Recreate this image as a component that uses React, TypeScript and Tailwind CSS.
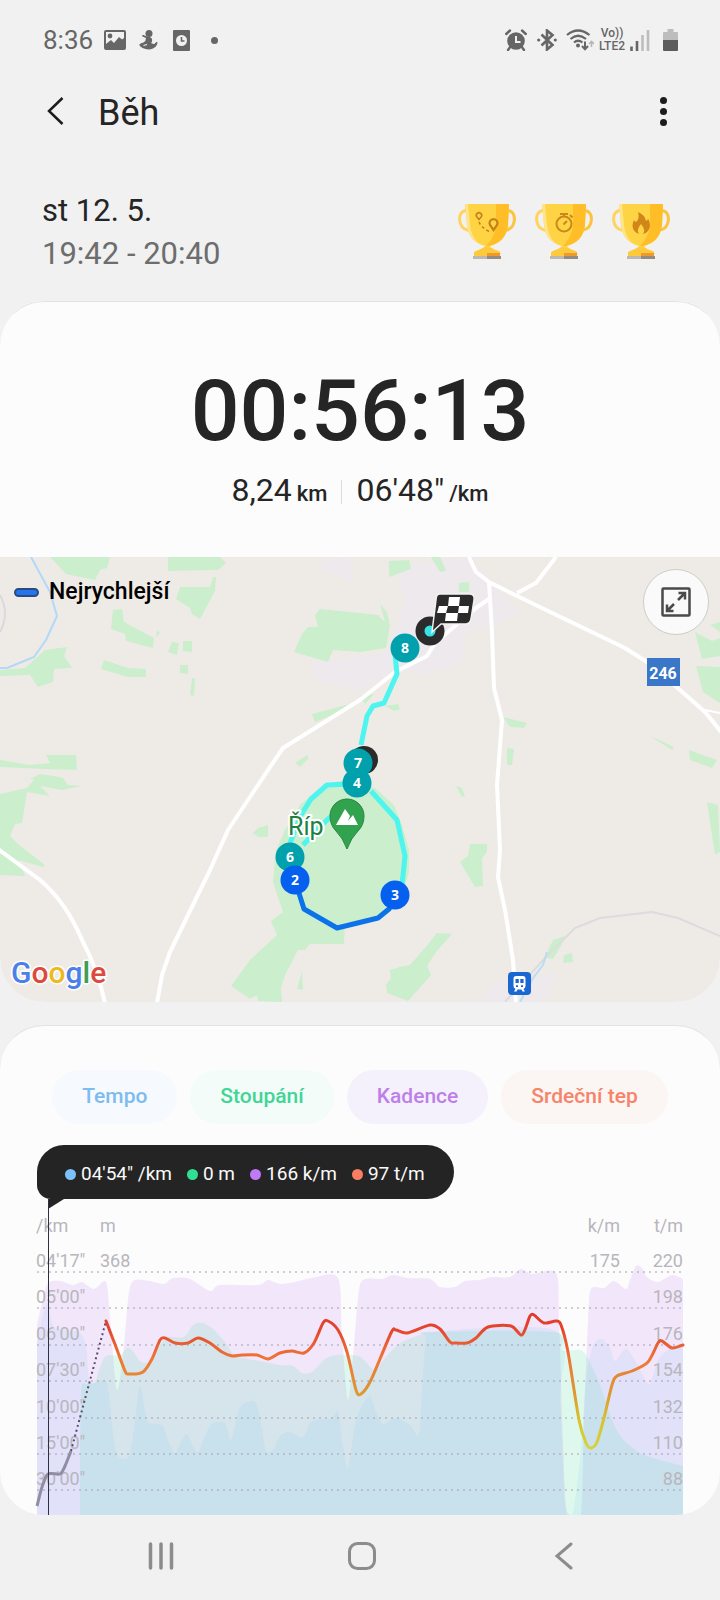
import type { ReactNode } from "react"

type Point = [number, number]

// Catmull-Rom spline through the points, as cubic beziers
function smooth(points: Point[]) {
  let d = `M${points[0][0]} ${points[0][1]}`
  for (let i = 0; i < points.length - 1; i++) {
    const p0 = points[i - 1] ?? points[i]
    const p1 = points[i]
    const p2 = points[i + 1]
    const p3 = points[i + 2] ?? p2
    d += ` C${p1[0] + (p2[0] - p0[0]) / 7} ${p1[1] + (p2[1] - p0[1]) / 7} ${p2[0] - (p3[0] - p1[0]) / 7} ${p2[1] - (p3[1] - p1[1]) / 7} ${p2[0]} ${p2[1]}`
  }
  return d
}

function area(points: Point[]) {
  return `${smooth(points)} V1515 H${points[0][0]} Z`
}

const cadence: Point[] = [
  [37, 1325], [42, 1303], [48, 1283], [60, 1281], [73, 1285], [82, 1282], [94, 1289], [106, 1282], [110, 1318], [117, 1390],
  [124, 1345], [129, 1292], [135, 1280], [150, 1281], [164, 1284], [173, 1278], [190, 1279], [210, 1291], [220, 1285], [258, 1285],
  [268, 1280], [280, 1284], [295, 1282], [312, 1278], [338, 1278], [342, 1335], [348, 1400], [354, 1345], [359, 1290], [365, 1279],
  [382, 1279], [393, 1275], [408, 1278], [430, 1279], [440, 1287], [455, 1287], [465, 1281], [480, 1280], [492, 1277], [510, 1277],
  [521, 1269], [532, 1274], [556, 1273], [559, 1320], [563, 1440], [566, 1505], [571, 1515], [581, 1514], [584, 1420], [588, 1320],
  [591, 1289], [604, 1288], [614, 1281], [626, 1289], [630, 1280], [636, 1266], [642, 1268], [647, 1277], [658, 1282], [672, 1275],
  [683, 1279],
]

const elevation: Point[] = [
  [80, 1515], [81, 1395], [86, 1384], [95, 1382], [100, 1367], [106, 1356], [120, 1355], [127, 1348], [133, 1351], [140, 1361],
  [150, 1362], [160, 1345], [168, 1337], [184, 1337], [193, 1325], [202, 1323], [212, 1328], [225, 1342], [236, 1356], [260, 1361],
  [280, 1365], [293, 1366], [302, 1373], [312, 1372], [325, 1359], [337, 1355], [358, 1356], [366, 1362], [375, 1370], [385, 1358],
  [400, 1343], [420, 1335], [432, 1332], [554, 1332], [562, 1350], [580, 1350], [588, 1358], [600, 1385], [612, 1420], [622, 1438],
  [640, 1453], [660, 1460], [683, 1466],
]

const pace: Point[] = [
  [37, 1345], [42, 1318], [48, 1303], [54, 1327], [78, 1332], [86, 1345], [90, 1382], [105, 1380], [109, 1395], [116, 1452],
  [129, 1456], [135, 1420], [140, 1386], [147, 1420], [155, 1424], [163, 1426], [168, 1440], [175, 1453], [181, 1442], [187, 1434],
  [193, 1446], [198, 1452], [205, 1436], [212, 1424], [225, 1423], [231, 1440], [239, 1410], [245, 1403], [256, 1403], [262, 1430],
  [266, 1451], [273, 1450], [280, 1436], [290, 1432], [303, 1437], [312, 1421], [330, 1419], [338, 1412], [342, 1440], [348, 1468],
  [355, 1425], [362, 1406], [370, 1396], [376, 1412], [383, 1424], [395, 1418], [410, 1425], [419, 1435], [422, 1390], [426, 1340],
  [432, 1332], [556, 1331], [560, 1400], [565, 1505], [570, 1515], [574, 1508], [581, 1450], [586, 1380], [593, 1346], [602, 1339],
  [610, 1348], [615, 1361], [626, 1349], [636, 1362], [649, 1384], [658, 1360], [668, 1350], [683, 1345],
]

const heartStart: Point[] = [[37, 1506], [42, 1487], [48, 1474], [60, 1474], [65, 1466], [71, 1451]]

const heartRate: Point[] = [
  [106, 1321], [116, 1347], [125, 1371], [129, 1374], [143, 1372], [152, 1359], [160, 1340], [165, 1338], [175, 1343], [188, 1343],
  [198, 1338], [210, 1343], [222, 1352], [232, 1356], [242, 1355], [257, 1355], [268, 1359], [280, 1353], [292, 1351], [304, 1353],
  [314, 1343], [323, 1323], [328, 1321], [338, 1330], [347, 1352], [356, 1390], [361, 1394], [371, 1380], [391, 1333], [396, 1330],
  [407, 1333], [430, 1325], [440, 1329], [450, 1342], [455, 1343], [467, 1343], [476, 1338], [488, 1327], [511, 1326], [522, 1335],
  [530, 1316], [534, 1315], [544, 1323], [556, 1321], [561, 1325], [568, 1352], [579, 1420], [586, 1443], [591, 1448], [597, 1442],
  [604, 1418], [612, 1385], [617, 1376], [632, 1371], [648, 1362], [658, 1343], [662, 1341], [672, 1348], [683, 1345],
]

const gridLines = [1272, 1308, 1345, 1381, 1418, 1454, 1490]
const paceLabels = ["04'17\"", "05'00\"", "06'00\"", "07'30\"", "10'00\"", "15'00\"", "30'00\""]
const pulseLabels = ["220", "198", "176", "154", "132", "110", "88"]

const woods = [
  "50,557 110,557 107,568 100,570 95,580 66,574",
  "168,557 220,557 226,563 218,570 168,571",
  "180,587 210,587 213,577 216,577 215,591 200,619 192,614 190,608 176,599",
  "113,610 122,609 124,622 154,638 153,648 126,641 125,634 111,629",
  "157,630 160,633 156,637",
  "172,642 179,643 177,655 168,652",
  "183,641 192,641 192,652 183,651",
  "104,660 128,668 146,669 146,677 128,677 101,669",
  "180,665 188,665 188,674 180,673",
  "192,678 195,678 194,696 190,695",
  "0,670 25,668 45,650 67,647 64,656 72,668 54,669 53,682 38,687 30,675 0,676",
  "320,609 360,613 378,615 385,622 380,604 387,612 390,625 386,648 360,652 333,650 328,662 294,652 302,634 308,627 318,627 315,615",
  "312,714 350,704 330,716 315,722",
  "360,697 374,694 365,704",
  "295,763 307,755 309,758 300,767",
  "0,760 30,765 50,763 46,755 76,755 77,770 45,769 0,767",
  "30,779 40,774 60,777 64,780",
  "0,794 27,788 38,775 63,778 68,785 82,786 62,790 40,786 50,796 27,792 22,823 15,824 10,836 18,844 45,865 43,867 18,860 25,876 0,875",
  "253,833 258,828 268,825 268,837 258,837",
  "325,784 345,780 375,788 394,805 402,825 409,850 409,872 400,905 380,918 345,923 344,944 310,944 305,950 298,950 285,975 281,988 282,1002 258,1001 257,995 250,999 231,986 250,960 277,935 271,921 283,912 273,882 276,850 285,830 300,805",
  "302,971 303,990 297,989",
  "437,933 452,934 436,952 427,966 431,975 408,1001 387,993 386,985 391,978 390,970 400,967 410,965 425,948",
  "470,844 487,844 487,852 482,858 483,886 475,887 460,862 468,856",
  "456,786 462,788 465,796 462,797",
  "547,958 548,950 553,940 565,936 560,948 553,959",
  "564,955 572,953 573,962 563,963",
  "707,802 718,805 720,852 715,855",
  "389,561 409,560 411,569 389,577",
  "431,557 440,557 446,571 440,572",
  "459,583 469,582 469,592 459,592",
  "695,632 712,641 720,638 720,656 702,659",
  "696,666 720,667 720,703 703,692",
  "710,625 720,622 720,632",
  "385,706 398,704 400,709 395,711",
  "503,717 527,723 524,728 510,727",
  "507,748 514,749 512,765 507,765",
  "650,736 674,747 672,750",
  "689,750 717,760 712,768 690,760",
]

const roads = [
  "M489 599 L476 608 L435 643 L427 656 L395 672 L360 700 L283 748 L268 770 L228 830 L210 870 L170 952 L162 975 L157 1003",
  "M469 557 L476 572 L489 582 L517 596 L625 648 L647 662 L680 690 L705 712 L722 733",
  "M556 557 L536 583 L517 593",
  "M489 582 L492 632 L494 688 L502 720 L497 785 L500 850 L498 877 L505 910 L513 960 L516 1003",
  "M-2 849 L40 880 Q66 902 82 940 Q98 970 105 1003",
]

const kilometers = [
  { n: 8, x: 405, y: 648, fill: "#00a0ad" },
  { n: 7, x: 358, y: 763, fill: "#00a0ad" },
  { n: 4, x: 357, y: 783, fill: "#00a0ad" },
  { n: 6, x: 290, y: 857, fill: "#00a0ad" },
  { n: 2, x: 295, y: 880, fill: "#0560f0" },
  { n: 3, x: 395, y: 895, fill: "#0560f0" },
]

const chips = [
  { label: "Tempo", style: "bg-[#f6f9fd] text-[#7cbcee]" },
  { label: "Stoupání", style: "bg-[#f3fcf8] text-[#41d596]" },
  { label: "Kadence", style: "bg-[#f4f1fc] text-[#bd7fe8]" },
  { label: "Srdeční tep", style: "bg-[#fbf5f4] text-[#f58468]" },
]

const readings = [
  { text: "04'54\" /km", dot: "bg-[#7cc0fb]" },
  { text: "0 m", dot: "bg-[#32df92]" },
  { text: "166 k/m", dot: "bg-[#bf7af5]" },
  { text: "97 t/m", dot: "bg-[#fb7e62]" },
]

function StatusBar() {
  return (
    <div className="flex h-20 items-center justify-between pr-[42px] pl-[43px] text-[#666]">
      <div className="flex items-center">
        <span className="text-[26px]">8:36</span>
        <svg className="ml-[11px]" width="22" height="20" viewBox="0 0 22 20">
          <rect x="1" y="1" width="20" height="18" rx="1" fill="none" stroke="#666" strokeWidth="2" />
          <circle cx="6" cy="6" r="2.4" fill="#666" />
          <path d="M2 18 V14 L7 10 L10 13 L15 7 L18 9.500 L20 8 V18 Z" fill="#666" />
        </svg>
        <svg className="ml-[13px]" width="19" height="20" viewBox="0 0 19 20">
          <circle cx="10" cy="3.600" r="3.500" fill="#666" />
          <path d="M7 8 L3.500 6.500 C2.500 5.500 3.500 4.500 5 5.200 L8 6.500 Q12 6.500 13 9 Q13.500 12 12 13 Q14 14 15.500 14 Q16.500 12.500 17.500 12 Q18.500 11.500 18.500 13 Q17.500 17 14 18.500 Q9 20.500 3.500 18 Q-.5 16 .5 14.500 Q1.500 13 4.500 12.500 Q7 11 7 8 Z" fill="#666" />
          <path d="M4.500 15.500 L8 14.500" stroke="#f1f1f1" strokeWidth="1.200" />
        </svg>
        <svg className="ml-[15px]" width="17" height="21" viewBox="0 0 17 21">
          <rect width="17" height="21" rx="1" fill="#666" />
          <circle cx="8.500" cy="10.500" r="5.500" fill="#f1f1f1" />
          <path d="M8.500 7 V11 H11.500" fill="none" stroke="#666" strokeWidth="1.600" />
        </svg>
        <span className="ml-[21px] size-[7px] rounded-full bg-[#666]" />
      </div>

      <div className="flex items-center">
        <svg width="22" height="22" viewBox="0 0 22 22">
          <circle cx="11" cy="12" r="8.800" fill="#666" />
          <path d="M5.500 17.500 L3 21 M16.500 17.500 L19 21 M1.200 5 L5 1.500 M20.800 5 L17 1.500" stroke="#666" strokeWidth="2.400" strokeLinecap="round" />
          <path d="M11 7 V13 H15.500" fill="none" stroke="#f1f1f1" strokeWidth="2" />
        </svg>
        <svg className="ml-[10px]" width="20" height="22" viewBox="0 0 20 22">
          <path d="M4.500 5.500 L15.500 16 L10 20.500 V1.500 L15.500 6 L4.500 16.500" fill="none" stroke="#666" strokeWidth="2.600" />
          <circle cx="1.700" cy="11" r="1.600" fill="#666" />
          <circle cx="18.300" cy="11" r="1.600" fill="#666" />
        </svg>
        <svg className="ml-[9px]" width="28" height="22" viewBox="0 0 28 22">
          <g fill="none" stroke="#666" strokeWidth="2.200">
            <path d="M1 6 Q12 -3 23.500 6" />
            <path d="M4.500 10 Q12 3.500 20 10" />
            <path d="M8 13.500 Q12 10 16.500 13.500" />
            <path d="M19 12.500 V19 M16 17 L19 20.200 L22 17" strokeWidth="2" />
            <path d="M25.500 18 V13 M23 15 L25.500 12.500 L28 15" stroke="#b5b5b5" strokeWidth="1.600" />
          </g>
          <circle cx="12" cy="16.500" r="2" fill="#666" />
        </svg>
        <div className="ml-[5px] flex flex-col items-center text-[12px] leading-[13px] font-medium">
          <span>Vo))</span>
          <span>LTE2</span>
        </div>
        <svg className="ml-[5px]" width="20" height="22" viewBox="0 0 20 22">
          <path d="M1.500 17.500 V22 M7 12 V22" stroke="#666" strokeWidth="2.600" />
          <path d="M12.500 6 V22 M18 1 V22" stroke="#bdbdbd" strokeWidth="2.600" />
        </svg>
        <svg className="ml-[13px]" width="15" height="22" viewBox="0 0 15 22">
          <path d="M4.500 0 H10.500 V3 H14 Q15 3 15 4 V12 H0 V4 Q0 3 1 3 H4.500 Z" fill="#bdbdbd" />
          <path d="M0 11 H15 V21 Q15 22 14 22 H1 Q0 22 0 21 Z" fill="#5c5c5c" />
        </svg>
      </div>
    </div>
  )
}

function Trophy({ children }: { children: ReactNode }) {
  return (
    <svg width="58" height="56" viewBox="0 0 58 56">
      <path d="M9 7.500 H7.500 Q1.500 9 1.500 16 Q2 26 11 27.500" fill="none" stroke="#ffd35e" strokeWidth="3" />
      <path d="M49 7.500 H50.500 Q56.500 9 56.500 16 Q56 26 47 27.500" fill="none" stroke="#fcc33c" strokeWidth="3" />
      <path d="M7 1 H51 L50 22 Q48 39 32 43 Q33 46 41 48 L43 51 H16 L18 48 Q25 46 27 43 Q11 39 9 22 Z" fill="#ffd444" />
      <path d="M38 1 H51 L50 22 Q48 39 31 43 H28 Q37 34 38 22 Z" fill="#ffbe28" />
      <path d="M7 1 H10 L12 22 Q13 33 20 40 Q10 34 9 22 Z" fill="#ffe48c" />
      <path d="M23 46 Q29 42 35 46 L42 49 V53 H16 V49 Z" fill="#ffc93c" />
      <path d="M29 50 H42 V53 H29 Z" fill="#ee9a2c" />
      <rect x="15" y="53" width="14" height="3" fill="#bdb9b2" />
      <rect x="29" y="53" width="14" height="3" fill="#958b80" />
      {children}
    </svg>
  )
}

function Trophies() {
  return (
    <div className="mb-[3px] flex gap-[19px]">
      <Trophy>
        <g fill="none" stroke="#c5811a">
          <path d="M21 16.500 L18.700 13.800 A2.700 2.700 0 1 1 23.300 13.800 Z" strokeWidth="1.600" />
          <path d="M35.500 27 L32 22 A4 4 0 1 1 39 22 Z" strokeWidth="2.200" />
          <path d="M21 19 Q23 24 31 28.500" strokeWidth="1.600" strokeDasharray="3 2.500" />
        </g>
      </Trophy>
      <Trophy>
        <g fill="none" stroke="#c98a1c" strokeWidth="2">
          <circle cx="29" cy="21" r="7.500" />
          <path d="M25 11 H33 M29 11 V14 M35 12 L37.500 14.500 M28.500 21.500 L32 18" />
        </g>
      </Trophy>
      <Trophy>
        <path d="M26 9 Q33 12 34 18 Q36 17 36 15.500 Q40 23 36 28 Q34 30.500 31 31 Q34 27 29 21 Q24 27 27 31 Q21 29 20.500 23 Q20.500 20 22 17 Q23 19 24 19 Q28 16 26 9 Z" fill="#d08618" />
      </Trophy>
    </div>
  )
}

function RouteMap() {
  return (
    <svg className="block w-full" viewBox="0 557 720 445" fontFamily="Roboto, sans-serif">
      <rect y="557" width="720" height="445" fill="#eeebe7" />
      <g fill="#ede9ed">
        <path d="M395 567 L470 557 L500 592 L519 615 L500 622 L465 632 L463 664 L420 675 L395 670 L360 690 L312 680 L312 664 L340 660 L388 652 L405 600 Z" />
        <path d="M320 560 L350 557 L352 582 L322 570 Z" />
        <path d="M478 1002 L490 985 L510 975 L558 975 L545 1002 Z" />
      </g>
      <g fill="#cbeecd">
        {woods.map((points) => (
          <polygon key={points} points={points} />
        ))}
      </g>
      <g fill="none" strokeLinejoin="round">
        <path d="M31 557 L50 592 L57 616 L46 640 L34 657 L7 668 H0" stroke="#b3d8f8" strokeWidth="2" />
        <path d="M0 595 Q10 613 0 632" stroke="#dcd8de" strokeWidth="2" />
        <path d="M505 1002 L545 958 L575 928 L600 918 L652 912 L678 918 L720 936" stroke="#dcdcde" strokeWidth="2" />
        <path d="M520 1002 L533 978 L543 965 L547 952" stroke="#b9dbf5" strokeWidth="2" />
        <g stroke="#fff" strokeWidth="4">
          {roads.map((d) => (
            <path key={d} d={d} />
          ))}
        </g>
        <path d="M705 710 L720 713" stroke="#fff" strokeWidth="2" />
        <g stroke="#4df5ee" strokeWidth="5">
          <path d="M395 655 L397 674 L384 703 L373 706 L367 716 L361 745" />
          <path d="M350 784 L327 785 L311 799 L301 815 L290 843" />
          <path d="M350 802 L328 819 L315 832 L303 845" />
          <path d="M371 791 L397 820 L405 856 L402 885" />
        </g>
        <path d="M394 900 L389 909 L378 918 L337 928 L304 909 L298 890" stroke="#0b72ea" strokeWidth="5" />
      </g>

      <circle cx="364" cy="760" r="14" fill="#2b2b2b" />
      {kilometers.map(({ n, x, y, fill }) => (
        <g key={n}>
          <circle cx={x} cy={y} r="14.500" fill={fill} />
          <text x={x} y={y + 5} textAnchor="middle" fill="#fff" fontSize="14" fontWeight="700" fontFamily="Noto Sans, sans-serif">
            {n}
          </text>
        </g>
      ))}

      {/* finish flag */}
      <circle cx="430" cy="631" r="10" fill="#35e4ea" stroke="#2b2b2b" strokeWidth="9" />
      <path d="M438 594 H469 Q475 594 474 600 L471 619 Q470 624 466 624 H441 L432 632 L436 600 Q436 594 440 594 Z" fill="#2b2b2b" stroke="#f4f2ee" strokeWidth="1.500" />
      <path d="M449 597 H460 L459 606 H448 Z M439 606 H448 L446 613 H437 Z M459 606 H469 L468 613 H458 Z M446 613 H458 L457 621 H445 Z" fill="#fff" />

      {/* mountain pin */}
      <path d="M347 849 Q343 838 336 831 Q330 825 330 816 A17 17 0 0 1 364 816 Q364 825 358 831 Q351 838 347 849 Z" fill="#31a34f" stroke="#27843f" strokeWidth="1" />
      <path d="M336 825 L345 809 L350 816 L348 821 L353 815 L358 825 Z" fill="#fff" />
      <text x="288" y="835" fontSize="25" fill="#217f43" stroke="#fff" strokeWidth="4" strokeLinejoin="round" paintOrder="stroke">
        Říp
      </text>

      <rect x="647" y="658" width="33" height="28" fill="#3a77c8" />
      <text x="663" y="679" textAnchor="middle" fill="#fff" fontSize="16" fontWeight="700">
        246
      </text>

      <rect x="508" y="972" width="23" height="23" rx="4" fill="#1b67d2" />
      <path d="M516 976 H523 Q525.500 976 525.500 979 V986 Q525.500 988 523.500 989 L525 991.500 H522.500 L521.500 989.500 H517.500 L516.500 991.500 H514 L515.500 989 Q513.500 988 513.500 986 V979 Q513.500 976 516 976 Z" fill="#fff" />
      <path d="M515.500 979 H518.800 V983 H515.500 Z M520.300 979 H523.600 V983 H520.300 Z M516 985.200 H518 V987 H516 Z M521 985.200 H523 V987 H521 Z" fill="#1b67d2" />

      <text x="11" y="983" fontSize="30" fontWeight="500" stroke="#fff" strokeWidth="3" strokeLinejoin="round" paintOrder="stroke">
        <tspan fill="#4a80e8">G</tspan>
        <tspan fill="#dc4a3e">o</tspan>
        <tspan fill="#edb91f">o</tspan>
        <tspan fill="#4a80e8">g</tspan>
        <tspan fill="#3c9f55">l</tspan>
        <tspan fill="#dc4a3e">e</tspan>
      </text>
    </svg>
  )
}

function WorkoutChart() {
  return (
    <svg className="block w-full" viewBox="0 1199 720 316" fontFamily="Roboto, sans-serif">
      <defs>
        <linearGradient id="pulse" gradientUnits="userSpaceOnUse" x1="0" y1="1310" x2="0" y2="1450">
          <stop offset="0" stopColor="#e0342a" />
          <stop offset="0.150" stopColor="#e5482d" />
          <stop offset="0.350" stopColor="#ee7638" />
          <stop offset="0.600" stopColor="#dc9a30" />
          <stop offset="0.780" stopColor="#d8c030" />
          <stop offset="1" stopColor="#d6d43a" />
        </linearGradient>
      </defs>
      <path d={area(cadence)} fill="#be6ef0" fillOpacity="0.150" />
      <path d={area(elevation)} fill="#32e196" fillOpacity="0.140" />
      <path d={area(pace)} fill="#73beff" fillOpacity="0.130" />

      {gridLines.map((y) => (
        <path key={y} d={`M37 ${y} H683`} stroke="#a9a5b5" strokeOpacity="0.550" strokeWidth="2" strokeDasharray="2 4" />
      ))}

      <g fontSize="18" fill="#b8b6bc">
        <text x="36" y="1232">/km</text>
        <text x="100" y="1232">m</text>
        <text x="100" y="1267">368</text>
        <text x="620" y="1232" textAnchor="end">k/m</text>
        <text x="620" y="1267" textAnchor="end">175</text>
        <text x="683" y="1232" textAnchor="end">t/m</text>
        {gridLines.map((y, i) => (
          <g key={y}>
            <text x="36" y={y - 5}>{paceLabels[i]}</text>
            <text x="683" y={y - 5} textAnchor="end">{pulseLabels[i]}</text>
          </g>
        ))}
      </g>

      <g fill="none">
        <path d={smooth(heartStart)} stroke="#918da3" strokeWidth="3" />
        <path d="M71 1451 L106 1321" stroke="#5a4a70" strokeWidth="2" strokeDasharray="2 3" />
        <path d={smooth(heartRate)} stroke="url(#pulse)" strokeWidth="3" strokeLinecap="round" strokeLinejoin="round" />
      </g>

      <path d="M48 1199 H64 L48 1209 Z" fill="#242424" />
      <path d="M48.500 1199 V1515" stroke="#2e3040" strokeWidth="1" />
    </svg>
  )
}

export default function App() {
  return (
    <div className="min-h-screen w-full bg-[#f1f1f1] font-['Roboto',sans-serif] text-[#252525]">
      <StatusBar />

      <header className="flex h-[62px] items-center justify-between pr-[48px] pl-[46px]">
        <div className="flex items-center gap-[34px]">
          <button type="button" aria-label="Zpět">
            <svg width="18" height="30" viewBox="0 0 18 30">
              <path d="M16.500 2 L3 15 L16.500 28" fill="none" stroke="#1c1c1c" strokeWidth="2.500" />
            </svg>
          </button>
          <h1 className="pt-1 text-[36px] leading-[42px]">Běh</h1>
        </div>
        <button type="button" aria-label="Další možnosti" className="flex flex-col gap-1 px-[5px]">
          <span className="size-[7px] rounded-full bg-[#1c1c1c]" />
          <span className="size-[7px] rounded-full bg-[#1c1c1c]" />
          <span className="size-[7px] rounded-full bg-[#1c1c1c]" />
        </button>
      </header>

      <main>
        <div className="flex items-center justify-between pt-[47px] pr-[50px] pb-[26px] pl-[42px]">
          <div className="text-[31px] leading-[43px]">
            <p>st 12. 5.</p>
            <p className="text-[#6d6d6d]">19:42 - 20:40</p>
          </div>
          <Trophies />
        </div>

        <section className="overflow-hidden rounded-[44px] bg-[#fcfcfc]">
          <div className="rounded-t-[44px] border-t border-[#e2e2e2] pt-[69px] pb-[45px]">
            <p className="text-center text-[86px] leading-[80px] font-medium">00:56:13</p>
            <div className="mt-[21px] flex h-10 items-center justify-center">
              <p className="flex items-baseline gap-[5px] text-[32px] leading-10">
                8,24
                <span className="text-[22px] font-medium">km</span>
              </p>
              <span className="mx-[14px] h-6 w-px bg-[#dcdcdc]" />
              <p className="flex items-baseline gap-[5px] text-[32px] leading-10">
                06'48"
                <span className="text-[22px] font-medium">/km</span>
              </p>
            </div>
          </div>

          <div className="relative">
            <RouteMap />
            <div className="absolute top-5 left-[14px] flex items-center gap-[10px]">
              <span className="h-[9px] w-[25px] rounded-full border-2 border-[#2c4a80] bg-[#2474ee]" />
              <span className="text-[23px] leading-[30px] font-medium text-black">Nejrychlejší</span>
            </div>
            <button
              type="button"
              aria-label="Zvětšit mapu"
              className="absolute top-3 right-[11px] flex size-[66px] items-center justify-center rounded-full border border-[#cfcdca] bg-[#fafafa]"
            >
              <svg width="30" height="30" viewBox="0 0 30 30" fill="none" stroke="#4a4a4a" strokeWidth="2.500">
                <rect x="1.500" y="1.500" width="27" height="27" rx="1" />
                <path d="M17 13 L24 6 M17.500 6 H24 V12.500 M13 17 L6 24 M6 17.500 V24 H12.500" />
              </svg>
            </button>
          </div>
        </section>

        <section className="mt-[23px] overflow-hidden rounded-[44px] border-t border-[#e2e2e2] bg-[#fcfcfc] pt-11">
          <div className="flex justify-center gap-[13px]">
            {chips.map(({ label, style }) => (
              <button key={label} type="button" className={`h-[54px] rounded-full px-[30px] text-[21px] font-medium ${style}`}>
                {label}
              </button>
            ))}
          </div>

          <div className="mt-[21px] ml-[37px] flex h-[54px] w-fit items-center gap-[15px] rounded-[27px] rounded-bl-[14px] bg-[#242424] pt-1 pr-[29px] pl-7 text-[19px] text-[#fafafa]">
            {readings.map(({ text, dot }) => (
              <span key={text} className="flex items-center gap-[5px]">
                <span className={`size-[11px] rounded-full ${dot}`} />
                {text}
              </span>
            ))}
          </div>

          <WorkoutChart />
        </section>
      </main>

      <nav className="grid h-[85px] grid-cols-3 items-center justify-items-center pr-[57px] pb-1 pl-[61px]">
        <button type="button" aria-label="Poslední aplikace">
          <svg width="28" height="28" viewBox="0 0 28 28">
            <path d="M3.500 2 V26 M14 2 V26 M24.500 2 V26" stroke="#8c8c8c" strokeWidth="3.500" strokeLinecap="round" />
          </svg>
        </button>
        <button type="button" aria-label="Domů">
          <svg width="28" height="28" viewBox="0 0 28 28">
            <rect x="1.500" y="1.500" width="25" height="25" rx="8" fill="none" stroke="#8c8c8c" strokeWidth="3" />
          </svg>
        </button>
        <button type="button" aria-label="Zpět">
          <svg width="28" height="28" viewBox="0 0 28 28">
            <path d="M22 2 L8 14 L22 26" fill="none" stroke="#8c8c8c" strokeWidth="3" strokeLinecap="round" />
          </svg>
        </button>
      </nav>
    </div>
  )
}
